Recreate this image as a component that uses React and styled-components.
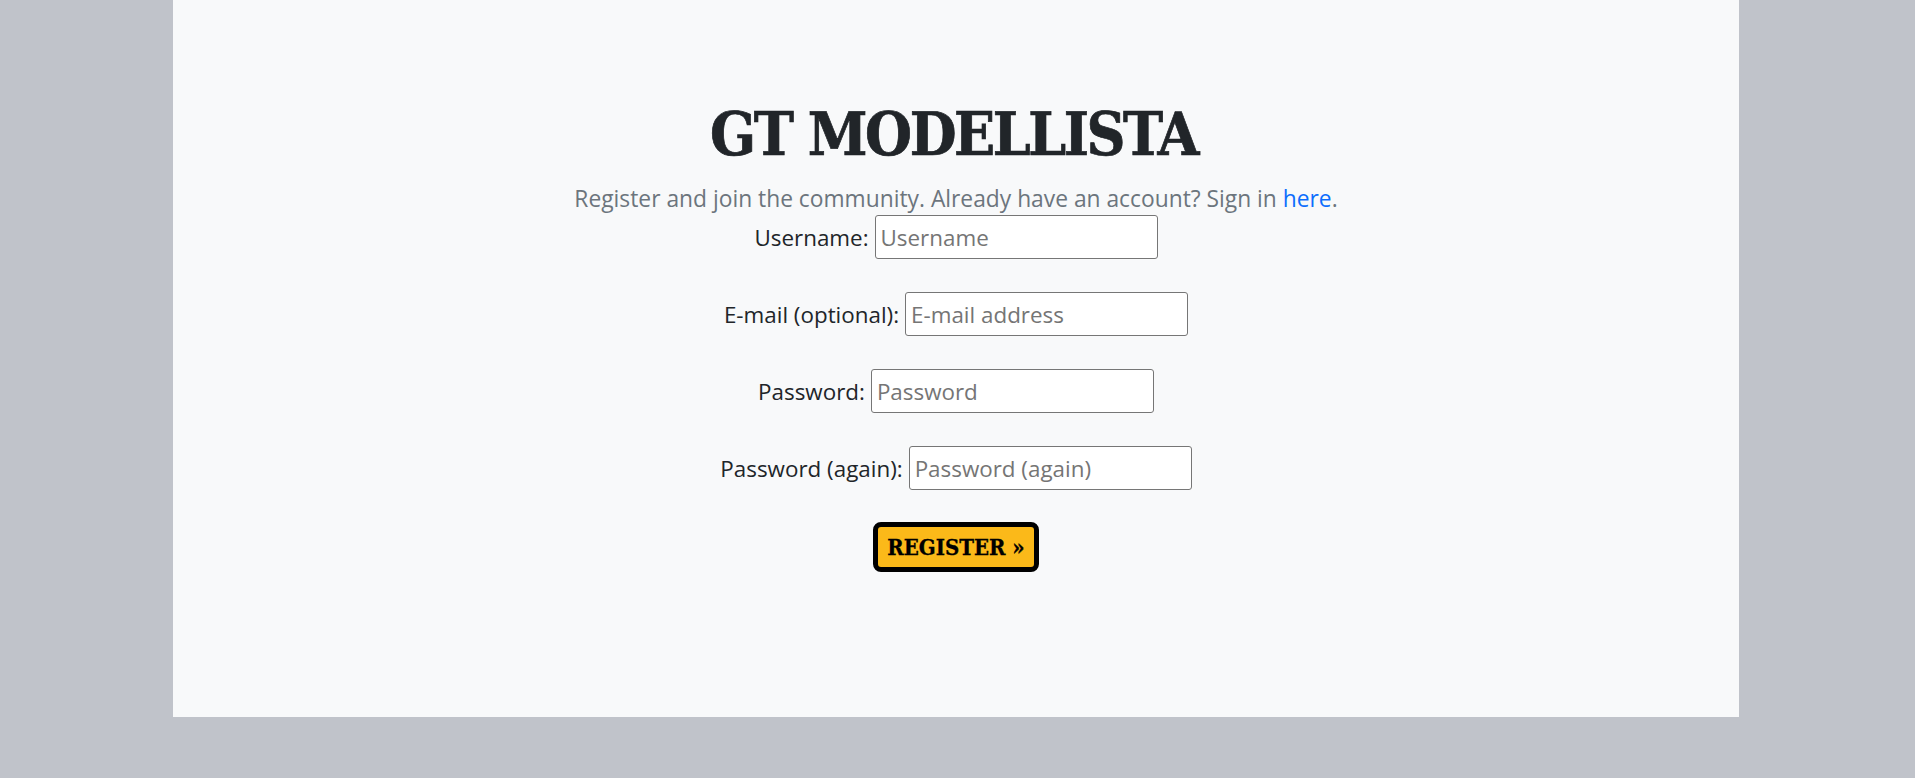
import React from "react";
import styled, { createGlobalStyle } from "styled-components";

const GlobalStyle = createGlobalStyle`
  html, body {
    margin: 0;
    padding: 0;
    background: #c0c3ca;
  }
  body {
    font-family: "Open Sans", "Noto Sans", Arial, sans-serif;
    color: #212529;
  }
`;

const Page = styled.div`
  display: flex;
  padding: 0 176px 0 173px;
  min-height: 778px;
  box-sizing: border-box;
`;

const Panel = styled.main`
  flex: 1;
  height: 717px;
  background: #f8f9fa;
  display: flex;
  flex-direction: column;
  align-items: center;
  padding-top: 98px;
  box-sizing: border-box;
`;

const Title = styled.h1`
  margin: 0 5px 0 0;
  font-family: "DejaVu Serif Condensed", "DejaVu Serif", serif;
  font-stretch: condensed;
  font-weight: 700;
  font-size: 60px;
  line-height: 72px;
  color: #212529;
  letter-spacing: -2.45px;
  -webkit-text-stroke: 0.7px #212529;
`;

const Lead = styled.p`
  margin: 14px 0 0;
  font-size: 22.8px;
  line-height: 30px;
  color: #6c757d;
`;

const Link = styled.a`
  color: #0d6efd;
  text-decoration: none;
`;

const Form = styled.form`
  display: flex;
  flex-direction: column;
  align-items: center;
  gap: 33px;
  margin-top: 1px;
`;

const Row = styled.div`
  display: flex;
  align-items: baseline;
  gap: 6px;
  font-size: 22.4px;
`;

const Label = styled.label`
  color: #212529;
`;

const Input = styled.input`
  box-sizing: border-box;
  width: 283px;
  height: 44px;
  padding: 0 5px;
  border: 1px solid #767676;
  border-radius: 3px;
  background: #fff;
  font: inherit;
  color: #212529;
  outline: none;
  &::placeholder {
    color: #757575;
  }
`;

const Button = styled.button`
  margin-top: -1px;
  box-sizing: border-box;
  height: 50px;
  padding: 0 9px;
  border: 5px solid #000;
  border-radius: 8px;
  background: #fbb919;
  color: #000;
  font-family: "DejaVu Serif Condensed", "DejaVu Serif", serif;
  font-stretch: condensed;
  font-weight: 700;
  font-size: 22px;
  -webkit-text-stroke: 0.3px #000;
  cursor: pointer;
`;

const fields = [
  { id: "username", label: "Username:", placeholder: "Username", type: "text" },
  { id: "email", label: "E-mail (optional):", placeholder: "E-mail address", type: "email" },
  { id: "password1", label: "Password:", placeholder: "Password", type: "password" },
  { id: "password2", label: "Password (again):", placeholder: "Password (again)", type: "password" },
];

export default function App() {
  return (
    <>
      <GlobalStyle />
      <Page>
        <Panel>
          <Title>GT MODELLISTA</Title>
          <Lead>
            Register and join the community. Already have an account? Sign in{" "}
            <Link href="#">here</Link>.
          </Lead>
          <Form onSubmit={(e) => e.preventDefault()}>
            {fields.map((f) => (
              <Row key={f.id}>
                <Label htmlFor={f.id}>{f.label}</Label>
                <Input id={f.id} type={f.type} placeholder={f.placeholder} />
              </Row>
            ))}
            <Button type="submit">REGISTER »</Button>
          </Form>
        </Panel>
      </Page>
    </>
  );
}
